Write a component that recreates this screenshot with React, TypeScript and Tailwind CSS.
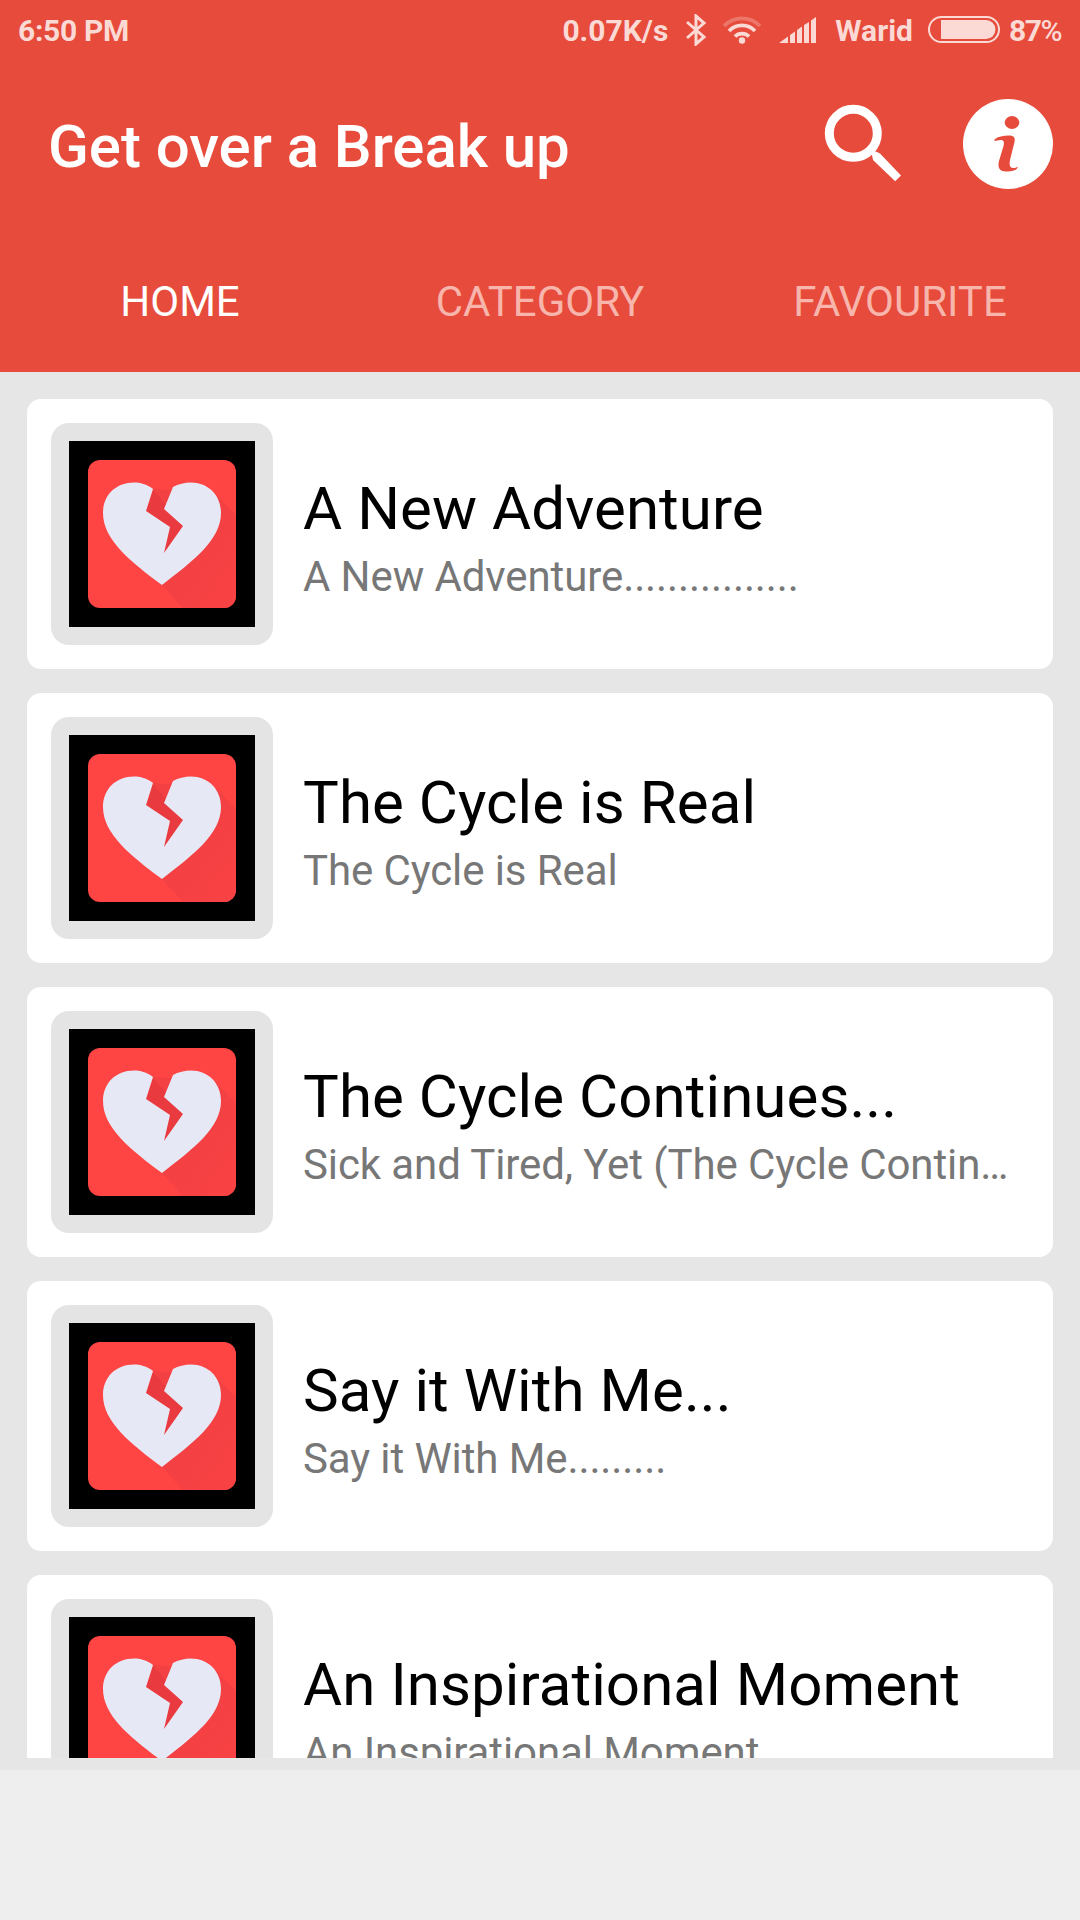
import React from 'react';

const posts = [
  { title: 'A New Adventure', text: 'A New Adventure................' },
  { title: 'The Cycle is Real', text: 'The Cycle is Real' },
  { title: 'The Cycle Continues...', text: 'Sick and Tired, Yet (The Cycle Continues)' },
  { title: 'Say it With Me...', text: 'Say it With Me.........' },
  { title: 'An Inspirational Moment', text: 'An Inspirational Moment' }
];

const tabs = ['HOME', 'CATEGORY', 'FAVOURITE'];

const StatusBar = () => (
  <div className="flex h-[60px] items-center pl-[18px] pr-[19px] text-[30px] leading-[61px] font-bold text-[#fbd9d5]">
    <span className="tracking-[-0.3px]">6:50 PM</span>
    <span className="ml-auto">0.07K/s</span>
    <svg className="ml-[17px] h-[32px] w-[22px]" viewBox="0 0 22 32" fill="none" stroke="currentColor" strokeWidth="3">
      <path d="M2 8 L19 23 L11 30 V2 L19 9 L2 24" />
    </svg>
    <svg className="ml-[15px] h-[30px] w-[40px]" viewBox="0 0 40 30" fill="none" stroke="currentColor" strokeWidth="3.8">
      <path d="M2 11 A25 25 0 0 1 38 11" className="opacity-30" />
      <path d="M7 16 A18 18 0 0 1 33 16" />
      <path d="M13 21.5 A10 10 0 0 1 27 21.5" />
      <circle cx="20" cy="25.5" r="3.2" fill="currentColor" stroke="none" />
    </svg>
    <svg className="ml-[17px] h-[26px] w-[38px]" viewBox="0 0 38 26" fill="currentColor">
      <path d="M0 26 L9 19.500 V26Z M11 18 L16 14.500 V26 H11Z M18 13 L23 9.500 V26 H18Z M25 8 L30 5 V26 H25Z M32 3.500 L37 0 V26 H32Z" />
    </svg>
    <span className="ml-[18px]">Warid</span>
    <svg className="ml-[15px] h-[28px] w-[74px]" viewBox="0 0 74 28">
      <rect x="1" y="1" width="70" height="25" rx="12.5" fill="none" stroke="currentColor" strokeWidth="2" />
      <path d="M13 4 H58 A9.5 9.5 0 0 1 58 23 H13Z" fill="currentColor" />
    </svg>
    <span className="ml-[7px] tracking-[-1.5px]">
      87<span className="font-medium">%</span>
    </span>
  </div>
);

const SearchIcon = () => (
  <svg className="h-[80px] w-[80px]" viewBox="0 0 80 80">
    <circle cx="30.3" cy="29.3" r="24" fill="none" stroke="#fff" strokeWidth="9" />
    <path d="M48.500 48.500 L53 47.500 L57 49.500 L78 71.500 L72.200 77.300 L50 56Z" fill="#fff" />
  </svg>
);

const InfoIcon = () => (
  <svg className="h-[90px] w-[90px]" viewBox="0 0 90 90">
    <circle cx="45" cy="45" r="45" fill="#fff" />
    <ellipse cx="49" cy="23.500" rx="7.300" ry="6.500" fill="#e64b3b" />
    <path
      d="M31.500 40.500 C35 37.500 40 36.500 46 36.500 C51 36.500 52.500 39 51.500 43 L47 61 C46 66 47 69 50 69 C52 69 53 68.500 55 68 C53.500 71.500 49 72.500 43 72.500 C36 72.500 34.500 68 36 62 L40.500 47 C41.500 42.500 40.500 41 37.500 41 C35 41 33.500 42 31.500 42Z"
      fill="#e64b3b"
    />
  </svg>
);

const BrokenHeart = () => (
  <svg className="h-[186px] w-[186px] bg-black" viewBox="0 0 186 186">
    <defs>
      <clipPath id="tile">
        <rect x="19" y="19" width="148" height="148" rx="12" />
      </clipPath>
      <linearGradient id="shadow" x1="0.3" y1="0.3" x2="0.9" y2="0.9">
        <stop offset="0" stopColor="#f24043" />
        <stop offset="1" stopColor="#fa4244" />
      </linearGradient>
    </defs>
    <rect x="19" y="19" width="148" height="148" rx="12" fill="#ff4444" />
    {/* long shadow */}
    <path d="M85 48 L145 52 L186 93 V186 H130 L88 138Z" fill="url(#shadow)" clipPath="url(#tile)" />
    <path d="M84 49 L97 64 L114 85 L95 112 L101 86 L77 70Z" fill="#e93b3f" />
    <path
      d="M84 48 C78 43 71 41.500 65 41.500 C47 41.500 34 54 34 72 C34 99 62 121 93 144 C124 120 152 99 152 72 C152 54 139 41.500 122 41.500 C116 41.500 109 43 104 46 L95 68 L114 85 L95 112 L101 86 L77 70Z"
      fill="#e6e8f5"
    />
  </svg>
);

const PostCard = ({ title, text }: { title: string; text: string }) => (
  <article className="flex h-[270px] shrink-0 rounded-[14px] bg-white p-6">
    <div className="h-[222px] w-[222px] shrink-0 rounded-[18px] bg-[#e4e4e4] p-[18px]">
      <BrokenHeart />
    </div>
    <div className="ml-[30px] min-w-0 flex-1 pt-[51px] pr-[16px]">
      <h2 className="truncate text-[60px] leading-[70px] tracking-[0.08px] text-black">{title}</h2>
      <p className="mt-[8px] truncate text-[42px] leading-[49px] tracking-[-0.1px] text-[#777777]">{text}</p>
    </div>
  </article>
);

const App = () => {
  return (
    <div className="flex h-[1920px] w-[1080px] flex-col overflow-hidden bg-[#eeeeee] font-['Roboto',sans-serif]">
      <header className="h-[372px] shrink-0 bg-[#e64b3b]">
        <StatusBar />
        <div className="flex h-[168px] items-center pl-[48px] pr-[27px]">
          <h1 className="mt-1.5 flex-1 text-[60px] leading-[70px] font-medium tracking-[-0.05px] text-white">
            Get over a Break up
          </h1>
          <SearchIcon />
          <div className="ml-[60px]">
            <InfoIcon />
          </div>
        </div>
        <nav className="grid h-[144px] grid-cols-3 text-center text-[42px] leading-[147px]">
          {tabs.map((tab, index) => (
            <span key={tab} className={index === 0 ? 'text-white' : 'text-[#f7b5ac]'}>
              {tab}
            </span>
          ))}
        </nav>
      </header>

      <main className="h-[1398px] shrink-0 bg-[#e6e6e6] px-[27px] pt-[27px] pb-3">
        <div className="flex h-full flex-col gap-6 overflow-hidden">
          {posts.map((post) => (
            <PostCard key={post.title} title={post.title} text={post.text} />
          ))}
        </div>
      </main>
    </div>
  );
};

export default App;
